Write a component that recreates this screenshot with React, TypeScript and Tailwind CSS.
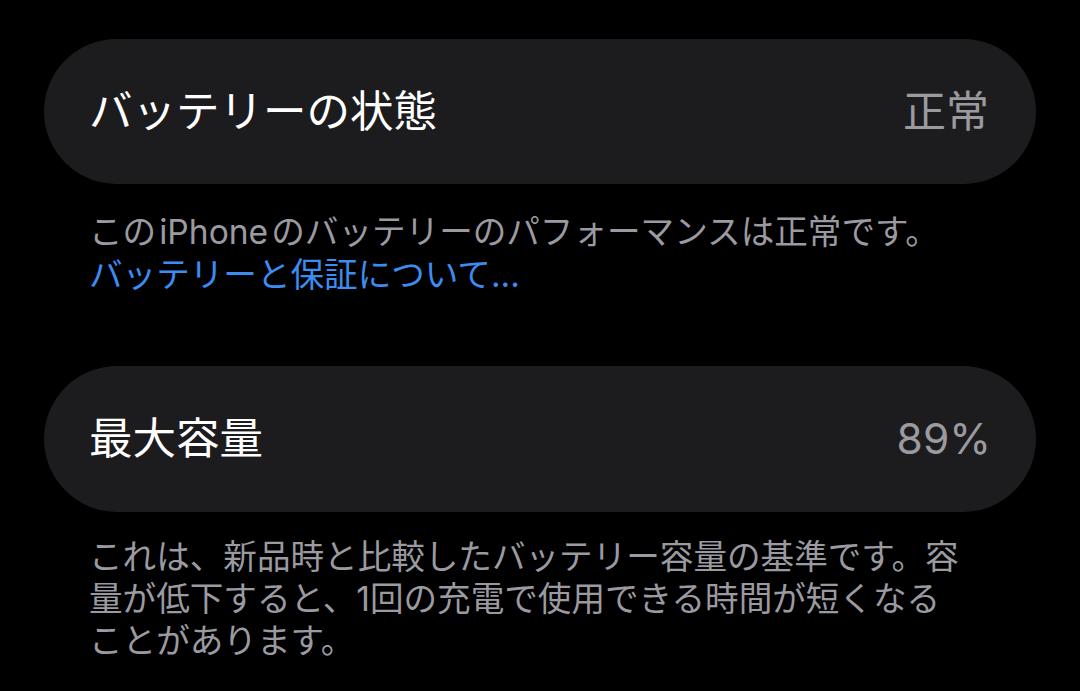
export default function App() {
  const font = { fontFamily: "Inter, 'Noto Sans CJK JP', sans-serif" };
  return (
    <div className="min-h-[691px] w-[1080px] bg-black px-[44px] pt-[39px]" style={font}>
      {/* Battery status row */}
      <div className="flex h-[145px] items-center justify-between rounded-full bg-[#1c1c1e] pl-[45px] pr-[47px]">
        <span className="text-[43.5px] leading-none text-white">バッテリーの状態</span>
        <span className="text-[43px] leading-none text-[#9a9a9f]">正常</span>
      </div>
      <div className="mt-[26px] pl-[45px] text-[33.6px] leading-[43px]">
        <p className="text-[#9a9aa0]">この&#8202;iPhone&#8202;のバッテリーのパフォーマンスは正常です。</p>
        <p className="text-[#3b8df2]">バッテリーと保証について...</p>
      </div>

      {/* Maximum capacity row */}
      <div className="mt-[70px] flex h-[146px] items-center justify-between rounded-full bg-[#1c1c1e] pl-[45px] pr-[45px]">
        <span className="text-[43.5px] leading-none text-white">最大容量</span>
        <span className="text-[42.5px] leading-none text-[#9a9a9f]">89%</span>
      </div>
      <div className="mt-[24px] pl-[45px] text-[33.6px] leading-[42px] text-[#9a9aa0]">
        <p>これは、新品時と比較したバッテリー容量の基準です。容</p>
        <p>量が低下すると、1回の充電で使用できる時間が短くなる</p>
        <p>ことがあります。</p>
      </div>
    </div>
  );
}
